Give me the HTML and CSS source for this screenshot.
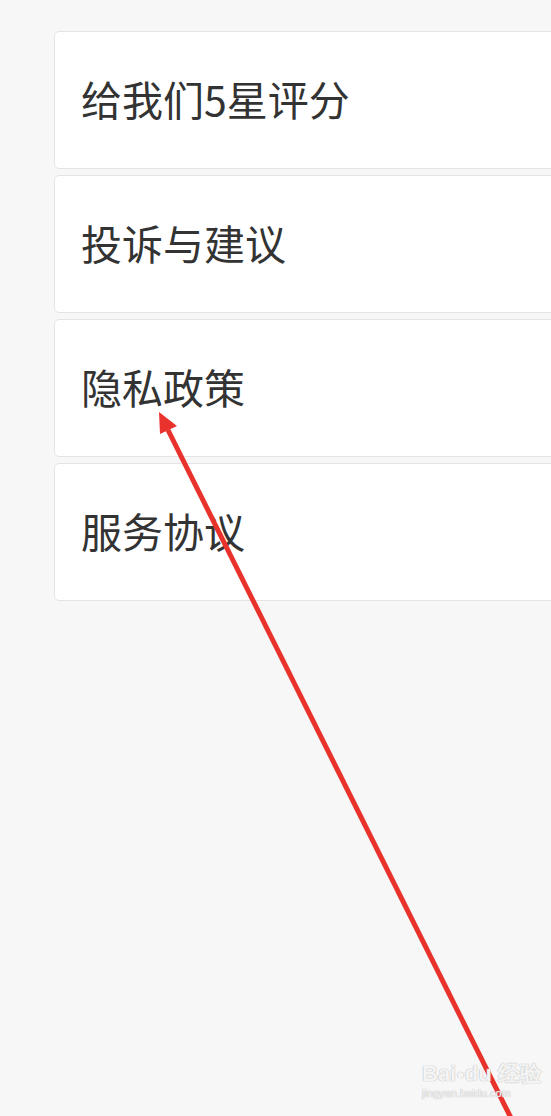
FILE: index.html
```html
<!DOCTYPE html>
<html>
<head>
    <title>设置</title>
    <meta name="viewport" content="width=device-width, initial-scale=1">
    <link rel="stylesheet" href="styles.css">
</head>
<body>

    <div class="menu">
        <div class="menu-item">给我们5星评分</div>
        <div class="menu-item">投诉与建议</div>
        <div class="menu-item">隐私政策</div>
        <div class="menu-item">服务协议</div>
    </div>

    <!-- annotation arrow drawn over the screenshot -->
    <svg class="arrow" width="551" height="1116" viewBox="0 0 551 1116">
        <line x1="168" y1="430" x2="512" y2="1120" stroke="#e8322b" stroke-width="5"/>
        <polygon points="159,412 177,426 160,434" fill="#e8322b"/>
    </svg>

    <div class="watermark">
        <div class="wm-logo">Bai<span class="paw">&#9679;</span>du 经验</div>
        <div class="wm-url">jingyan.baidu.com</div>
    </div>

</body>
</html>
```

FILE: styles.css
```css
html, body {
    margin: 0;
}
html {
    width: 100%;
    height: 100vh;
}
body {
    font-family: "Noto Sans CJK SC", "Noto Sans", sans-serif;
    background-color: #f7f7f7;
    height: 100%;
    overflow: hidden;
    position: relative;
}

.menu {
    display: flex;
    flex-direction: column;
    gap: 6px;
    padding-top: 31px;
    padding-left: 54px;
    margin-right: -20px;
}

.menu-item {
    height: 136px;
    box-sizing: content-box;
    display: flex;
    align-items: center;
    padding-left: 26px;
    padding-bottom: 4px;
    height: 132px;
    background-color: #fff;
    border: 1px solid #e4e4e4;
    border-radius: 5px;
    font-size: 41px;
    color: #333;
}

.arrow {
    position: absolute;
    top: 0;
    left: 0;
}

.watermark {
    position: absolute;
    left: 422px;
    top: 1062px;
    color: rgba(255, 255, 255, 0.85);
    text-shadow: 0 0 1px #bbb, 0 0 1px #bbb;
    font-family: "Liberation Sans", sans-serif;
}

.wm-logo {
    font-size: 22px;
    font-weight: bold;
    line-height: 24px;
}

.paw {
    font-size: 14px;
    vertical-align: top;
}

.wm-url {
    font-size: 11px;
    line-height: 14px;
}
```
